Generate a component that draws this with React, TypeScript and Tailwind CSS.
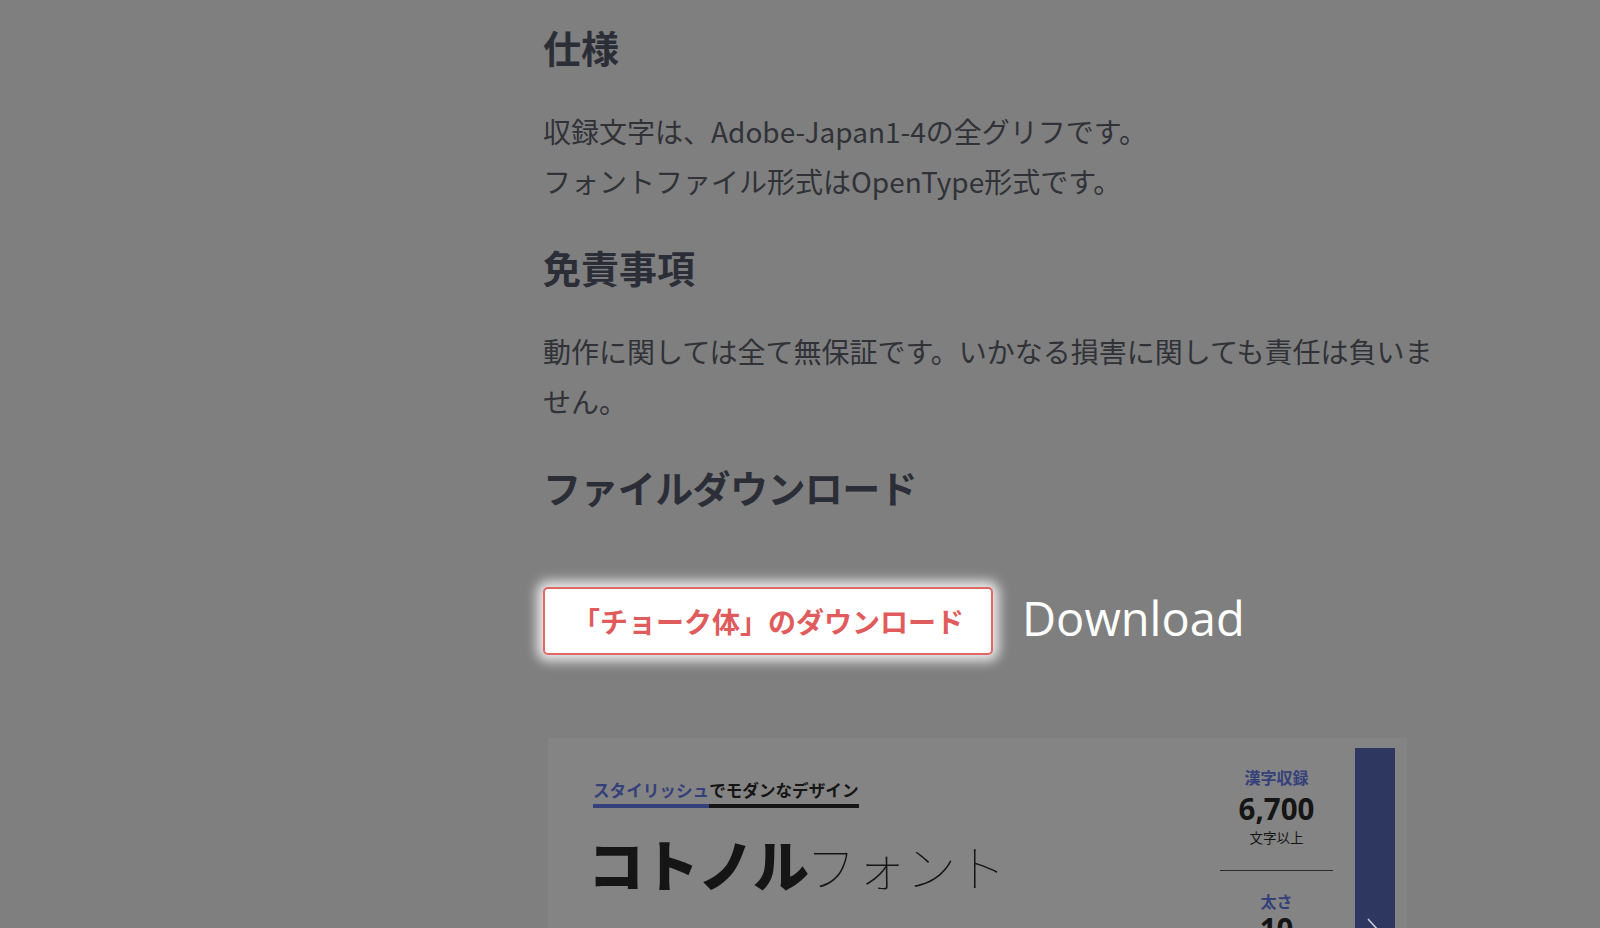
import React from "react";

export default function App() {
  return (
    <div className="w-[1600px] h-[928px] overflow-hidden bg-[#7f7f7f] font-['Noto_Sans_CJK_JP',sans-serif]">
      <main className="ml-[543px] w-[910px] pt-[20px]">
        <h2 className="text-[38px] leading-[53px] font-bold text-[#2b2e37] mb-[33px]">仕様</h2>
        <p className="text-[28px] leading-[50.4px] text-[#303238] mb-[33px]">
          収録文字は、Adobe-Japan1-4の全グリフです。
          <br />
          フォントファイル形式はOpenType形式です。
        </p>

        <h2 className="text-[38px] leading-[53px] font-bold text-[#2b2e37] mb-[33px]">免責事項</h2>
        <p className="text-[28px] leading-[50.4px] text-[#303238] mb-[33px]">
          動作に関しては全て無保証です。いかなる損害に関しても責任は負いません。
        </p>

        <h2 className="text-[38px] leading-[53px] font-bold tracking-[-0.6px] text-[#2b2e37] mb-[74px]">ファイルダウンロード</h2>

        <div className="flex items-center gap-[29px]">
          <a
            href="#"
            className="flex h-[68px] w-[450px] items-center justify-center rounded-[5px] border-2 border-[#e26868] bg-white shadow-[0_0_12px_6px_rgba(255,255,255,0.85)]"
          >
            <span className="text-[28px] font-bold leading-none text-[#e05c5c]">「チョーク体」のダウンロード</span>
          </a>
          <span className="mb-[4px] font-['Open_Sans',sans-serif] text-[47px] leading-none text-white">Download</span>
        </div>

        <section className="mt-[83px] ml-[5px] flex h-[260px] w-[859px] bg-[#848484]">
          <div className="flex-1 pl-[45px] pt-[40px]">
            <div className="flex text-[16.6px] font-bold leading-[24px]">
              <span className="border-b-[4px] border-[#34407a] pb-[2px] text-[#34407a]">スタイリッシュ</span>
              <span className="border-b-[4px] border-[#151515] pb-[2px] text-[#151515]">でモダンなデザイン</span>
            </div>
            <div className="mt-[27px] -ml-[5px] flex items-baseline text-[#151515]">
              <span className="text-[56px] font-black leading-none tracking-[-1px]">コトノル</span>
              <span className="-ml-[2px] text-[50px] font-thin leading-none">フォント</span>
            </div>
          </div>

          <div className="flex w-[113px] flex-col items-center pt-[28px] text-[#151515]">
            <span className="text-[16px] font-bold leading-[22px] text-[#34407a]">漢字収録</span>
            <span className="mt-[5px] font-['Noto_Sans',sans-serif] text-[29.5px] font-bold leading-[32px]">6,700</span>
            <span className="mt-[3px] text-[13.5px] leading-[18px]">文字以上</span>
            <div className="mt-[24px] h-px w-full bg-[#2a2a2a]" />
            <span className="mt-[19px] text-[16px] font-bold leading-[22px] text-[#34407a]">太さ</span>
            <span className="mt-[1px] font-['Noto_Sans',sans-serif] text-[29.5px] font-bold leading-[32px]">10</span>
          </div>

          <div className="ml-[22px] mr-[12px] mt-[10px] w-[40px] bg-[#2d3760] pl-[11px] pt-[169px]">
            <svg width="16" height="26" viewBox="0 0 16 26" fill="none">
              <polyline points="2,2 12,13 2,24" stroke="#c9cbd6" strokeWidth="1.6" />
            </svg>
          </div>
        </section>
      </main>
    </div>
  );
}
